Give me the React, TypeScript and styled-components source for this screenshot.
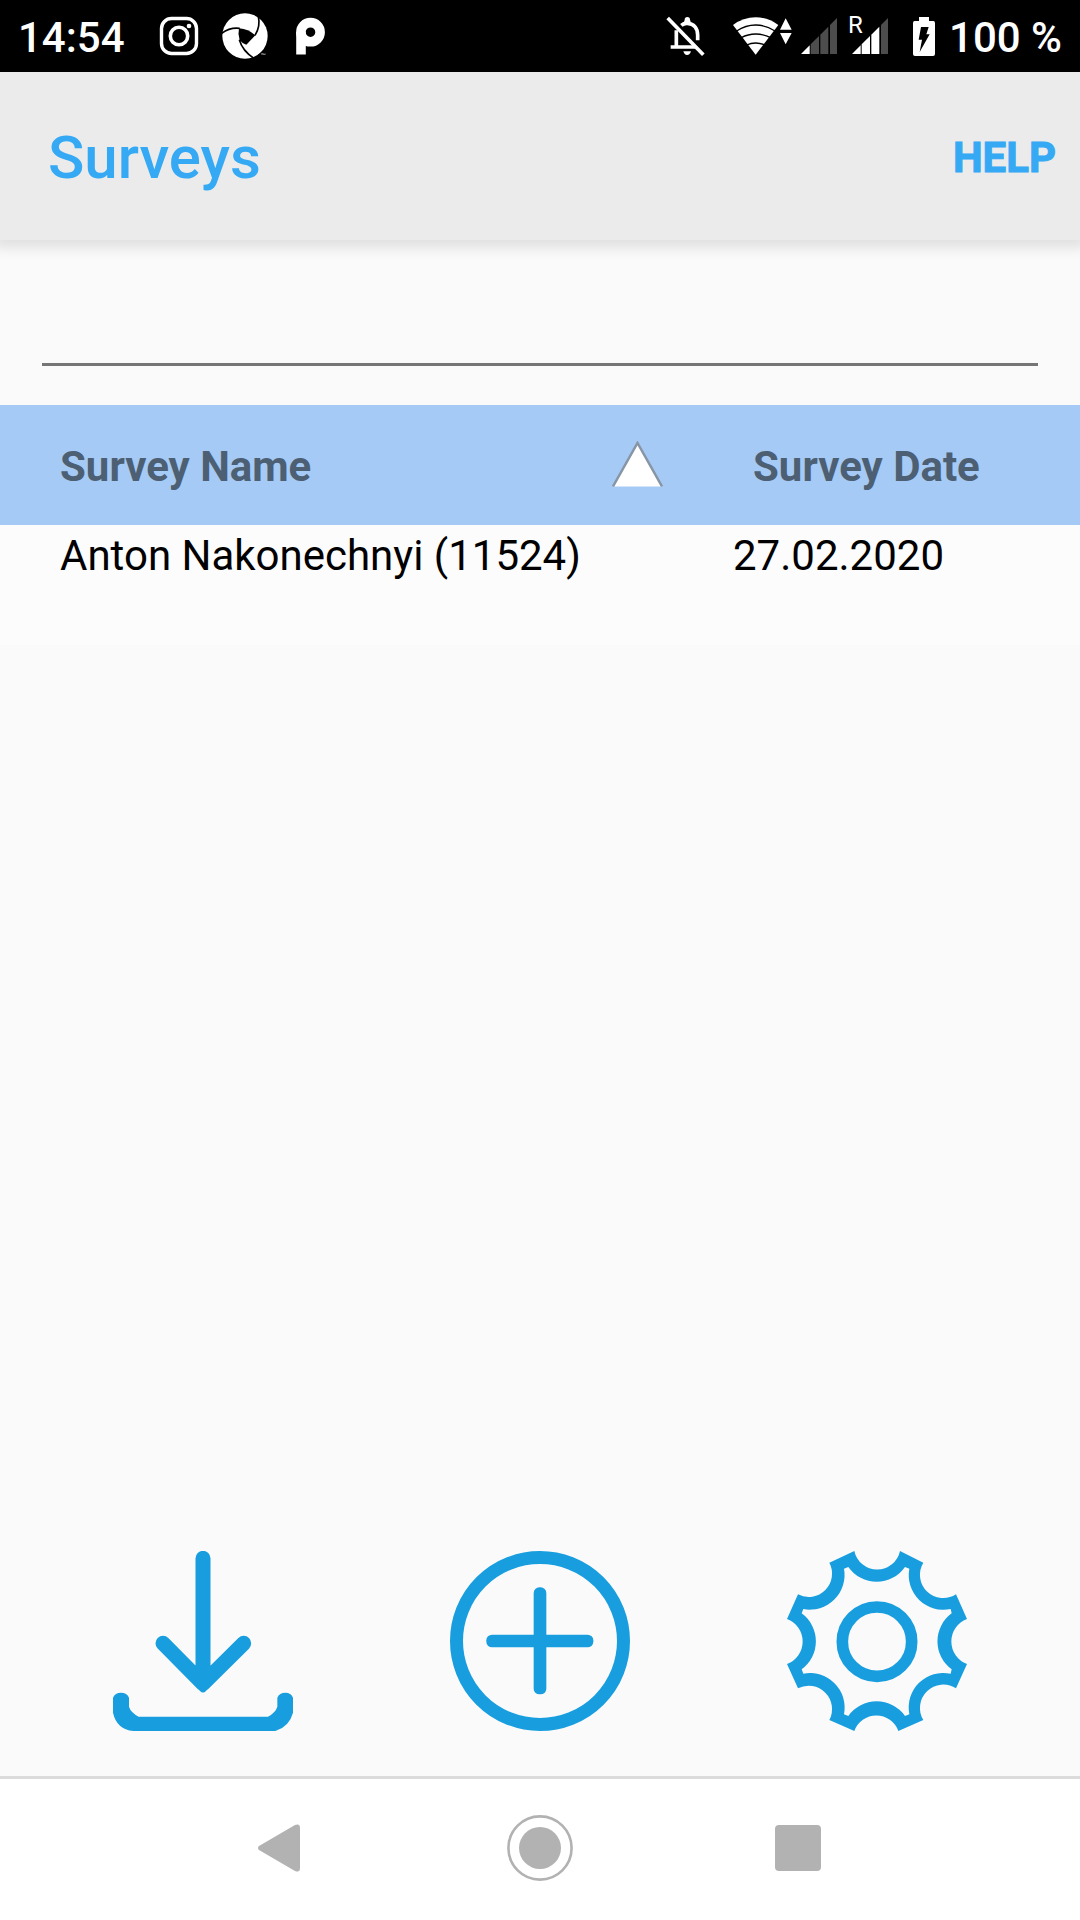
import React from "react";
import styled, { createGlobalStyle } from "styled-components";

const BLUE = "#189edf";

const GlobalStyle = createGlobalStyle`
  *, *::before, *::after { box-sizing: border-box; }
  body {
    margin: 0;
    background: #fafafa;
    font-family: Roboto, "Noto Sans", sans-serif;
    font-size: 42px;
    line-height: 50px;
    color: #000;
  }
  button, input {
    font: inherit;
    color: inherit;
    border: 0;
    padding: 0;
    margin: 0;
    background: none;
    outline: none;
  }
  svg { display: block; flex: none; }
`;

const Screen = styled.div`
  min-height: 100vh;
  display: flex;
  flex-direction: column;
`;

const StatusBar = styled.div`
  display: flex;
  align-items: center;
  justify-content: space-between;
  height: 72px;
  padding: 0 18px;
  background: #000;
  color: #fff;
`;

const StatusGroup = styled.div`
  display: flex;
  align-items: center;
  gap: 18px;
`;

const Clock = styled.time`
  font-weight: 500;
  margin-right: 12px;
  padding-top: 3px;
`;

const SystemIcons = styled.div`
  display: flex;
  align-items: center;
`;

const SystemIcon = styled.span<{ $gap?: number }>`
  position: relative;
  margin-left: ${(p) => p.$gap ?? 0}px;
`;

const Roaming = styled.span`
  position: absolute;
  left: -4px;
  top: -7px;
  font-size: 24px;
  line-height: 28px;
`;

const Percent = styled.span`
  margin-left: 14px;
  padding-top: 3px;
  font-weight: 500;
`;

const Toolbar = styled.header`
  position: relative;
  display: flex;
  align-items: center;
  justify-content: space-between;
  height: 168px;
  padding: 4px 24px 0 48px;
  background: #ebebeb;
  color: #35a9f4;
  box-shadow: 0 2px 12px 6px rgba(0, 0, 0, 0.1);
`;

const Title = styled.h1`
  margin: 0;
  font-size: 60px;
  line-height: 72px;
  font-weight: 500;
`;

const HelpButton = styled.button`
  font-weight: 700;
  -webkit-text-stroke: 1px currentColor;
`;

const SearchArea = styled.div`
  padding: 0 42px 39px;
`;

const SearchInput = styled.input`
  display: block;
  width: 100%;
  height: 126px;
  padding-top: 42px;
  border-bottom: 3px solid #757575;
`;

const SurveyTable = styled.table`
  width: 100%;
  table-layout: fixed;
  border-collapse: collapse;
  text-align: left;
`;

const HeadCell = styled.th<{ $date?: boolean }>`
  width: ${(p) => (p.$date ? "347px" : "auto")};
  height: 120px;
  padding: ${(p) => (p.$date ? "0 0 0 20px" : "0 70px 0 60px")};
  background: #a5caf6;
  color: #4c5f73;
  font-weight: 700;
`;

const SortButton = styled.button`
  display: flex;
  align-items: center;
  justify-content: space-between;
  width: 100%;
`;

const SortLabel = styled.span`
  padding-top: 4px;
`;

const Cell = styled.td<{ $date?: boolean }>`
  height: 120px;
  padding: 6px 0 0 ${(p) => (p.$date ? 0 : 60)}px;
  vertical-align: top;
  background: #fcfcfc;
`;

const Content = styled.main`
  flex: 1;
  display: flex;
  flex-direction: column;
`;

const Actions = styled.div`
  display: grid;
  grid-template-columns: repeat(3, 1fr);
  justify-items: center;
  margin-top: auto;
  padding: 0 34px 45px;
`;

const IconButton = styled.button`
  display: flex;
  align-items: center;
  justify-content: center;
`;

const NavBar = styled.nav`
  display: flex;
  justify-content: center;
  height: 144px;
  padding-bottom: 3px;
  border-top: 3px solid #dcdcdc;
  background: #fff;
`;

const NavButton = styled.button`
  width: 258px;
  display: flex;
  align-items: center;
  justify-content: center;
`;

const CameraIcon = () => (
  <svg width="48" height="48" viewBox="0 0 48 48" fill="none" stroke="#fff">
    <rect x="6.5" y="6.5" width="35" height="35" rx="10" strokeWidth="3.4" />
    <circle cx="24" cy="24" r="8.7" strokeWidth="3.6" />
    <circle cx="34" cy="14" r="2.3" fill="#fff" stroke="none" />
  </svg>
);

const ApertureIcon = () => (
  <svg width="48" height="48" viewBox="662 35 144 144">
    <circle cx="734" cy="107" r="68" fill="#fff" />
    <path d="M716 84Q744 86 765 105L738 133Q724 128 718 120Q712 101 716 84Z" fill="#000" />
    <g fill="none" stroke="#000" strokeWidth="5">
      <path d="M774 48Q781 78 764 105" />
      <path d="M664 99Q690 80 718 84" />
      <path d="M717 118Q726 151 762 175" />
    </g>
    <path d="M774 162h30v20h-34z" fill="#000" />
    <path d="M783 160h5M785 160v4M790 164v-4l2 2 2-2v4" fill="none" stroke="#fff" strokeWidth="1.5" />
  </svg>
);

const LetterBadgeIcon = () => (
  <svg width="48" height="48" viewBox="0 0 48 48" fill="none" stroke="#fff">
    <circle cx="23.5" cy="20.2" r="9.6" strokeWidth="9.6" />
    <path d="M14 20v22.5" strokeWidth="9.6" />
  </svg>
);

const BellOffIcon = () => (
  <svg width="40" height="42" viewBox="78 48 120 126" fill="none" stroke="#fff">
    <path d="M109 94V144M92 144H166M124 79Q132 72 142 73C164 74 173 90 173 108V124" strokeWidth="11" />
    <path d="M128 72Q134 68 134 62Q134 54 142 54Q150 54 150 62Q150 68 158 74Z" fill="#fff" stroke="none" />
    <path d="M130 157H153Q150 168 141 168Q133 168 130 157Z" fill="#fff" stroke="none" />
    <path d="M83 57L190 167" strokeWidth="11" />
  </svg>
);

const WifiIcon = () => (
  <svg width="59" height="38" viewBox="278 50 177 114">
    <path d="M346 163L278 74Q309 51 346 51Q383 51 414 74Z" fill="#fff" />
    <g fill="none" stroke="#000" strokeWidth="4">
      <path d="M289 92Q316 74 346 74Q377 74 404 92" />
      <path d="M303 112Q323 101 346 101Q370 101 391 112" />
      <path d="M319 134Q331 128 346 128Q361 128 374 134" />
    </g>
    <path d="M419 88L436 54L454 88ZM419 98H454L436 132Z" fill="#fff" />
  </svg>
);

const SignalIcon = ({ level }: { level: number }) => (
  <svg width="36" height="36" viewBox="0 0 108 108">
    {[
      "M0 108L26 82V108Z",
      "M29 108V79L54 54V108Z",
      "M58 108V50L82 26V108Z",
      "M87 108V21L108 0V108Z",
    ].map((d, i) => (
      <path key={d} d={d} fill={i < level ? "#fff" : "#4d4d4d"} />
    ))}
  </svg>
);

const BatteryIcon = () => (
  <svg width="22" height="39" viewBox="819 48 66 117">
    <path d="M837 48H867V60H880Q885 60 885 66V159Q885 165 879 165H825Q819 165 819 159V66Q819 60 824 60H837Z" fill="#fff" />
    <path d="M843 78H866L859 100H869L839 153L846 116H836Z" fill="#000" />
  </svg>
);

const SortIcon = () => (
  <svg width="51" height="48" viewBox="0 1 51 48">
    <path d="M25.5 3L50 46.5H1Z" fill="#fff" />
    <path d="M1 46.5L25.5 3L50 46.5" fill="none" stroke="#8795a5" strokeWidth="2.5" />
  </svg>
);

const DownloadIcon = () => (
  <svg width="180" height="180" viewBox="69 63 540 540">
    <path
      d="M339 85V455M219 340L339 461L461 340"
      fill="none"
      stroke={BLUE}
      strokeWidth="45"
      strokeLinecap="round"
      strokeLinejoin="round"
    />
    <path d="M316 450L330 483Q339 492 348 483L362 450Z" fill={BLUE} />
    <path
      d="M69 503Q75 488 93 488Q111 488 117 503V530Q122 547 146 560H534Q557 547 562 530V503Q568 488 586 488Q603 488 609 503V548Q598 590 556 603H130Q80 598 69 548Z"
      fill={BLUE}
    />
  </svg>
);

const AddIcon = () => (
  <svg width="180" height="180" viewBox="60 63 540 540" fill="none" stroke={BLUE}>
    <circle cx="330" cy="333" r="250.5" strokeWidth="39" />
    <g fill={BLUE} stroke="none">
      <rect x="311" y="172" width="38" height="321" rx="17" />
      <rect x="169" y="314" width="321" height="38" rx="17" />
    </g>
  </svg>
);

const GearIcon = () => (
  <svg width="180" height="180" viewBox="54 63 540 540">
    <path
      fillRule="evenodd"
      fill={BLUE}
      d="M256 63A70 70 0 0 0 393 63L463 98A70 70 0 0 0 561 193L594 267A72 72 0 0 0 594 402L561 475A70 70 0 0 0 463 570L388 603A70 70 0 0 0 256 603L181 570A70 70 0 0 0 87 475L54 402A72 72 0 0 0 54 267L87 193A70 70 0 0 0 181 98Z
      M238 111L225 116A104 104 0 0 1 103 237L98 250A104 104 0 0 1 98 418L103 431A104 104 0 0 1 225 553L238 558A104 104 0 0 1 408 558L421 553A104 104 0 0 1 545 431L548 418A104 104 0 0 1 548 250L545 237A104 104 0 0 1 421 116L408 111A104 104 0 0 1 238 111Z"
    />
    <circle cx="324" cy="335" r="104" fill="none" stroke={BLUE} strokeWidth="35" />
  </svg>
);

const BackIcon = () => (
  <svg width="48" height="48" viewBox="0 0 48 48">
    <path d="M1 22L37 1Q42 -1 42 4V44Q42 49 37 47L1 26Q-1 24 1 22Z" fill="#b2b2b2" />
  </svg>
);

const HomeIcon = () => (
  <svg width="66" height="66" viewBox="0 0 66 66">
    <circle cx="33" cy="33" r="31.6" fill="none" stroke="#b2b2b2" strokeWidth="2.6" />
    <circle cx="33" cy="33" r="21" fill="#b2b2b2" />
  </svg>
);

const RecentsIcon = () => (
  <svg width="46" height="46" viewBox="0 0 46 46">
    <rect width="46" height="46" rx="4" fill="#b2b2b2" />
  </svg>
);

const surveys = [{ name: "Anton Nakonechnyi (11524)", date: "27.02.2020" }];

export default function App() {
  return (
    <Screen>
      <GlobalStyle />
      <StatusBar>
        <StatusGroup>
          <Clock>14:54</Clock>
          <CameraIcon />
          <ApertureIcon />
          <LetterBadgeIcon />
        </StatusGroup>
        <SystemIcons>
          <SystemIcon><BellOffIcon /></SystemIcon>
          <SystemIcon $gap={27}><WifiIcon /></SystemIcon>
          <SystemIcon $gap={9}><SignalIcon level={1} /></SystemIcon>
          <SystemIcon $gap={15}>
            <Roaming>R</Roaming>
            <SignalIcon level={3} />
          </SystemIcon>
          <SystemIcon $gap={25}><BatteryIcon /></SystemIcon>
          <Percent>100 %</Percent>
        </SystemIcons>
      </StatusBar>
      <Toolbar>
        <Title>Surveys</Title>
        <HelpButton type="button">HELP</HelpButton>
      </Toolbar>
      <Content>
        <SearchArea>
          <SearchInput type="text" aria-label="Search surveys" />
        </SearchArea>
        <SurveyTable>
          <thead>
            <tr>
              <HeadCell scope="col" aria-sort="ascending">
                <SortButton type="button">
                  <SortLabel>Survey Name</SortLabel>
                  <SortIcon />
                </SortButton>
              </HeadCell>
              <HeadCell scope="col" $date>
                <SortButton type="button">
                  <SortLabel>Survey Date</SortLabel>
                </SortButton>
              </HeadCell>
            </tr>
          </thead>
          <tbody>
            {surveys.map((survey) => (
              <tr key={survey.name}>
                <Cell>{survey.name}</Cell>
                <Cell $date>{survey.date}</Cell>
              </tr>
            ))}
          </tbody>
        </SurveyTable>
        <Actions>
          <IconButton type="button" aria-label="Download"><DownloadIcon /></IconButton>
          <IconButton type="button" aria-label="Add survey"><AddIcon /></IconButton>
          <IconButton type="button" aria-label="Settings"><GearIcon /></IconButton>
        </Actions>
      </Content>
      <NavBar>
        <NavButton type="button" aria-label="Back"><BackIcon /></NavButton>
        <NavButton type="button" aria-label="Home"><HomeIcon /></NavButton>
        <NavButton type="button" aria-label="Recent apps"><RecentsIcon /></NavButton>
      </NavBar>
    </Screen>
  );
}
